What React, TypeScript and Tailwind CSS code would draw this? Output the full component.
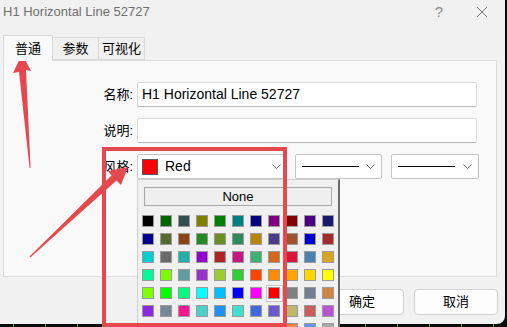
import React from "react";

const colors = [
  ["#000000", "#006400", "#2f4f4f", "#808000", "#008000", "#008080", "#000080", "#800080", "#800000", "#4b0082", "#191970"],
  ["#00008b", "#556b2f", "#8b4513", "#228b22", "#6b8e23", "#2e8b57", "#b8860b", "#483d8b", "#a0522d", "#0000cd", "#a52a2a"],
  ["#00ced1", "#696969", "#20b2aa", "#9400d3", "#b22222", "#c71585", "#3cb371", "#d2691e", "#dc143c", "#4682b4", "#daa520"],
  ["#00fa9a", "#7cfc00", "#5f9ea0", "#9932cc", "#9acd32", "#32cd32", "#ff4500", "#ff8c00", "#ffa500", "#ffd700", "#ffff00"],
  ["#7fff00", "#00ff00", "#00ff7f", "#00ffff", "#00bfff", "#0000ff", "#ff00ff", "#ff0000", "#808080", "#708090", "#cd853f"],
  ["#8a2be2", "#778899", "#ff1493", "#48d1cc", "#1e90ff", "#40e0d0", "#4169e1", "#6a5acd", "#bdb76b", "#cd5c5c", "#ba55d3"],
  ["#adff2f", "#66cdaa", "#8fbc8f", "#ff6347", "#bc8f8f", "#da70d6", "#9370db", "#db7093", "#ff7f50", "#6495ed", "#a9a9a9"],
];

const font = { fontFamily: '"Liberation Sans", "Noto Sans CJK SC", sans-serif' };

function Chevron() {
  return (
    <svg width="9" height="5" viewBox="0 0 9 5" className="shrink-0">
      <polyline points="0.5,0.5 4.5,4.5 8.5,0.5" fill="none" stroke="#6b6b6b" strokeWidth="1" />
    </svg>
  );
}

function LineCombo({ width }: { width: string }) {
  return (
    <div className={`${width} h-[25px] flex items-center bg-white border border-[#c4c4c4] rounded-[2px] pl-[6px] pr-[6px]`}>
      <div className="w-[57px] h-px bg-black" />
      <div className="flex-1" />
      <Chevron />
    </div>
  );
}

export default function App() {
  return (
    <div className="relative w-[507px] h-[327px] overflow-hidden bg-[#0b0b0b] text-black" style={font}>
      {/* dialog */}
      <div className="w-[505px] h-[324px] bg-[#f1f1f1] rounded-br-[8px] flex flex-col">
        <div className="h-[24px] flex items-center pl-[3px] pr-[17px] text-[13px] text-[#6f6f6f]">
          <span>H1 Horizontal Line 52727</span>
          <div className="flex-1" />
          <span className="text-[15px] text-[#8a8a8a] mr-[33px]">?</span>
          <svg width="12" height="12" viewBox="0 0 12 12">
            <path d="M1 1 L11 11 M11 1 L1 11" stroke="#7a7a7a" strokeWidth="1" />
          </svg>
        </div>

        {/* tabs */}
        <div className="mt-[11px] h-[25px] flex items-end pl-[3px] text-[13px]">
          <div className="w-[50px] h-[26px] -mb-px z-10 bg-[#f9f9f9] border border-[#d9d9d9] border-b-0 flex items-center justify-center">
            普通
          </div>
          <div className="w-[46px] h-[23px] bg-[#f0f0f0] border border-l-0 border-[#d9d9d9] flex items-center justify-center">
            参数
          </div>
          <div className="w-[46px] h-[23px] bg-[#f0f0f0] border border-l-0 border-[#d9d9d9] flex items-center justify-center">
            可视化
          </div>
        </div>

        {/* panel */}
        <div className="ml-[3px] w-[494px] h-[217px] bg-[#f9f9f9] border border-[#dcdcdc] pt-[21px] flex flex-col gap-[11px] text-[13px]">
          <div className="flex items-center">
            <div className="w-[129px] text-right">名称:</div>
            <div className="ml-[4px] w-[340px] h-[25px] bg-white border border-[#dadada] border-b-[#b8b8b8] rounded-[2px] flex items-center pl-[4px] text-[14px]">
              H1 Horizontal Line 52727
            </div>
          </div>
          <div className="flex items-center">
            <div className="w-[129px] text-right">说明:</div>
            <div className="ml-[4px] w-[340px] h-[25px] bg-white border border-[#dadada] border-b-[#b8b8b8] rounded-[2px]" />
          </div>
          <div className="flex items-center">
            <div className="w-[129px] text-right">风格:</div>
            <div className="ml-[4px] w-[149px] h-[25px] bg-white border border-[#c4c4c4] rounded-[2px] flex items-center pl-[4px] pr-[4px]">
              <div className="w-[16px] h-[16px] bg-[#ff0000] border border-[#5a5a5a]" />
              <span className="ml-[7px] text-[14px]">Red</span>
              <div className="flex-1" />
              <Chevron />
            </div>
            <div className="ml-[9px]">
              <LineCombo width="w-[87px]" />
            </div>
            <div className="ml-[9px]">
              <LineCombo width="w-[88px]" />
            </div>
          </div>
        </div>

        {/* buttons */}
        <div className="mt-[12px] flex justify-end gap-[10px] pr-[7px] text-[13px]">
          <div className="w-[84px] h-[26px] bg-[#fdfdfd] border border-[#d0d0d0] rounded-[4px] flex items-center justify-center">
            确定
          </div>
          <div className="w-[84px] h-[26px] bg-[#fdfdfd] border border-[#d0d0d0] rounded-[4px] flex items-center justify-center">
            取消
          </div>
        </div>
      </div>

      {/* chart ticks below dialog */}
      <div className="flex pl-[13px] gap-[31px]">
        {Array.from({ length: 16 }).map((_, i) => (
          <div key={i} className="w-px h-[3px] bg-[#2ea043]" />
        ))}
      </div>

      {/* colour popup */}
      <div className="absolute left-[137px] top-[179px] w-[203px] h-[160px] bg-[#f0f0f0] border-l border-t border-[#cfcfcf] border-r-2 border-r-[#6a6a6a]">
        <div className="ml-[6px] mt-[7px] w-[188px] h-[19px] border border-[#a8a8a8] bg-[#efefef] flex items-center justify-center text-[13px]">
          None
        </div>
        <div className="ml-[1px] mt-[6px] flex flex-col">
          {colors.map((row, r) => (
            <div key={r} className="flex">
              {row.map((c, i) => {
                const selected = r === 4 && i === 7;
                return (
                  <div key={i} className="w-[18px] h-[18px] flex items-center justify-center">
                    {selected ? (
                      <div className="w-[17px] h-[17px] bg-white border border-[#c6c6c6] flex items-center justify-center">
                        <div className="w-[12px] h-[12px] border border-[#9a9a9a]" style={{ backgroundColor: c }} />
                      </div>
                    ) : (
                      <div className="w-[12px] h-[12px] border border-[#9a9a9a]" style={{ backgroundColor: c }} />
                    )}
                  </div>
                );
              })}
            </div>
          ))}
        </div>
      </div>

      {/* annotation rectangle */}
      <div className="absolute left-[102px] top-[147px] w-[185px] h-[180px] border-[4px] border-[#e6494d]" />

      {/* annotation arrows */}
      <svg className="absolute left-0 top-0" width="507" height="327" viewBox="0 0 507 327">
        <polygon
          points="22,54 31,71 26,70 30.6,168 29.6,168 19,72 13,73"
          fill="#e6494d"
        />
        <polygon
          points="128,167 121,185 116.5,180.5 30.6,257.3 29.5,256.4 111.5,175.5 108,171"
          fill="#e6494d"
        />
      </svg>
    </div>
  );
}
